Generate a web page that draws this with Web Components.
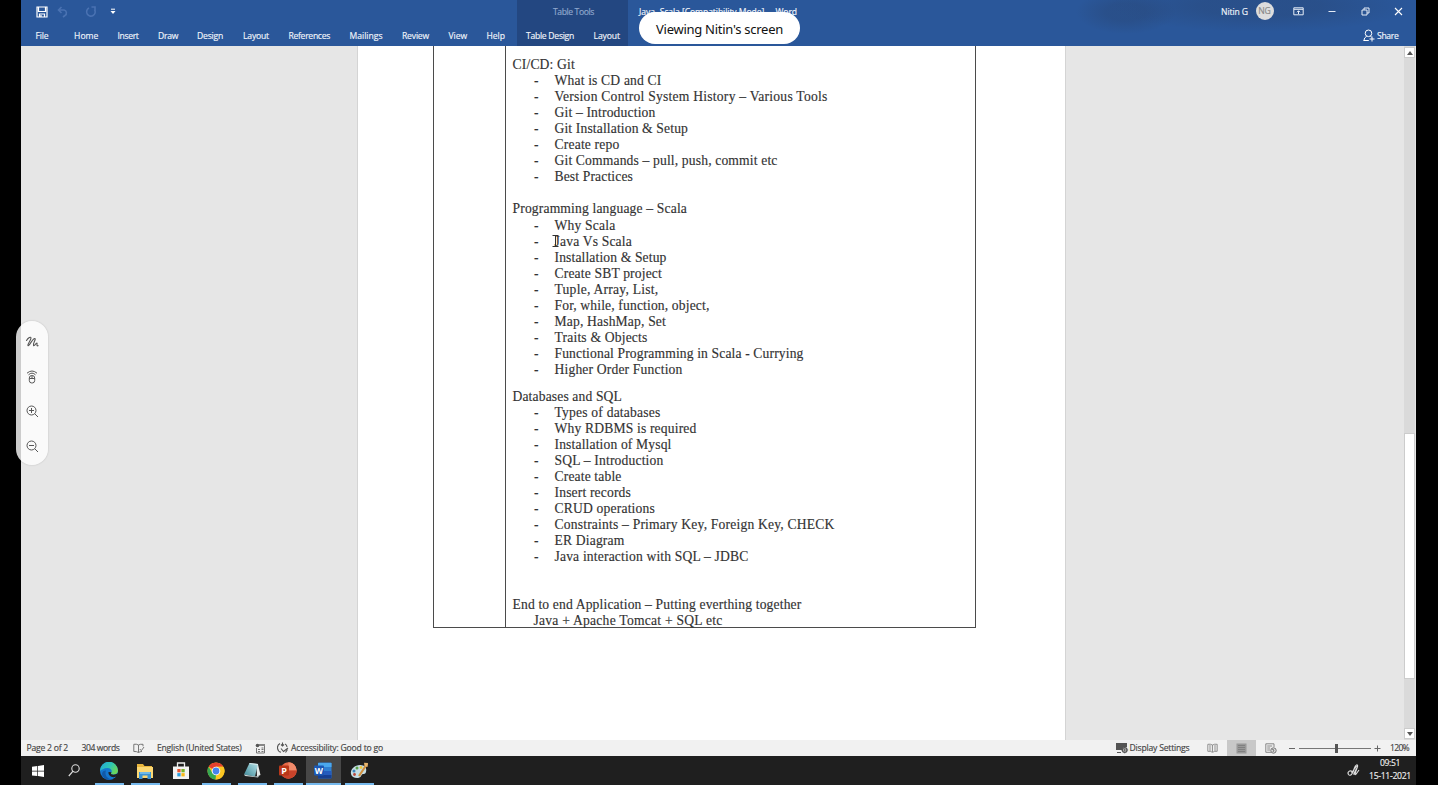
<!DOCTYPE html>
<html lang="en"><head><meta charset="utf-8"><title>Word</title>
<style>body{margin:0;background:#000;overflow:hidden}</style></head><body>
<shared-screen></shared-screen>
<script>
const define=(name,html,after)=>customElements.define(name,class extends HTMLElement{
  connectedCallback(){ if(this.shadowRoot)return; const t=document.createElement('template');t.innerHTML=html;
    this.attachShadow({mode:'open'}).append(t.content.cloneNode(true)); if(after)after.call(this,this.shadowRoot);}
});
// Text run that tracks its letters to occupy the width given in "w".
define('fit-text','<style>:host{display:block;white-space:nowrap;flex:none}span{display:inline-block}</style><span><slot></slot></span>',function(r){
  const w=+this.getAttribute('w');if(!w)return;this.style.width=w+'px';
  const s=r.querySelector('span'),n=this.textContent.length;
  s.style.letterSpacing=((w-s.getBoundingClientRect().width)/n)+'px';
});
// Icon: drawn from the named entry, on a box of w by h.
const ICONS={
save:[12,12,'<path d="M1 1h10v10H1zM2.500 1v4.500h7V1M3.500 11V8h5v3M5 9v2" fill="none" stroke="#fff" stroke-width="1.200"/>'],
undo:[12,12,'<path d="M4.500 1L1.500 4l3 3M2 4h5a3 3 0 0 1 1 5.500L6 11" fill="none" stroke="#4a72b2" stroke-width="1.600"/>'],
redo:[12,12,'<path d="M9.500 3.500A4.300 4.300 0 1 1 4 2M6.500 1H10v4" fill="none" stroke="#4a72b2" stroke-width="1.600"/>'],
more:[6,7,'<path d="M1 1.200h4" stroke="#fff"/><path d="M.5 3h5L3 6z" fill="#fff"/>'],
ribbon:[11,9,'<path d="M.8.8h9.400v7H.8zM1 2.300h9M5.500 7V4M4 5.200l1.500-1.500L7 5.200" fill="none" stroke="#e6edf7"/>'],
min:[8,8,'<path d="M.5 3.500h7" stroke="#e6edf7"/>'],
restore:[9,9,'<path d="M1 3h5v5H1zM3 3V1h5v5H6" fill="none" stroke="#e6edf7"/>'],
close:[9,9,'<path d="M1 1l7 7M8 1L1 8" stroke="#fff" stroke-width="1.100"/>'],
share:[12,13,'<circle cx="5.500" cy="4.300" r="3.300" fill="none" stroke="#fff"/><path d="M.8 12Q1 8.500 3.800 7M.8 11.500h5M7.300 7l1.300 1M9 7.500v5M6.500 10h5" fill="none" stroke="#fff"/>'],
pen:[14,12,'<path d="M1.500 4.500C3 2 6 0 6 2 6 4.500 2 8.500 3 9.500c1.200 1 4.500-7 6.700-7 2 0-2.300 5.500-1.200 7 .9.900 2.300-2.500 3.300-2.500.8 0-.4 2.300.4 2.800.4.200.7 0 .8-.3" fill="none" stroke="#555" stroke-width="1.100" stroke-linecap="round"/>'],
mouse:[12,14,'<path d="M1 3.200Q6-1.200 11 3.200M2.500 4.800Q6 1.500 9.500 4.800" fill="none" stroke="#555"/><rect x="3.300" y="5.500" width="5.400" height="7.500" rx="2.500" fill="none" stroke="#555"/><path d="M3.500 8.500h5M6 5.500v3" stroke="#555"/>'],
zin:[13,13,'<circle cx="5.500" cy="5.500" r="4.500" fill="none" stroke="#555"/><path d="M8.700 8.700L12 12M3 5.500h5M5.500 3v5" stroke="#555"/>'],
zout:[13,13,'<circle cx="5.500" cy="5.500" r="4.500" fill="none" stroke="#555"/><path d="M8.700 8.700L12 12M3 5.500h5" stroke="#555"/>'],
proof:[12,11,'<path d="M5.500 2Q3.500.8.800 1.300v7.200q2.700-.3 4.700 1M5.500 2v7.500M5.500 2Q7 1 10 1.300v2M5.500 9.500Q7 8.500 9 8.500M6.800 6l1.500 1.700L11 4" fill="none" stroke="#777"/>'],
macro:[11,11,'<path d="M4 1h6v2H4z" fill="#888"/><circle cx="2.500" cy="2.500" r="1.800" fill="#555"/><path d="M1.500 5v5h8V3M3 6.500h2M3 8.500h2M6.500 5h2M6.500 6.500h2M6.500 8.500h2" fill="none" stroke="#777"/>'],
access:[12,12,'<path d="M3 1.500A4.700 4.700 0 0 0 4 10.200M5.500.5v3M4 2.500L5.500 4 7 2.500M8 2q2 1 2 3M4 6.500l2.500 3L11 6M8.500 10.500l2-3" fill="none" stroke="#555" stroke-width="1.100"/>'],
display:[13,12,'<path d="M0 1h11v4H8L6 8H0z" fill="#555"/><path d="M1 10.500h4" stroke="#555"/><circle cx="8.700" cy="8" r="2.300" fill="#eee" stroke="#555" stroke-width="1.300"/><circle cx="8.700" cy="8" r=".8" fill="#555"/><path d="M8.700 4.500v7M5.200 8h7" stroke="#555" stroke-width=".6"/>'],
book:[11,10,'<path d="M5.500 2Q3.500.8.800 1.300v7Q3.500 8 5.500 9.300 7.500 8 10.200 8.300v-7Q7.500.8 5.500 2v7M2 3h2.200M2 5h2.200M2 7h2.200M7 3h2.200M7 5h2.200M7 7h2.200" fill="none" stroke="#888" stroke-width=".9"/>'],
print:[11,11,'<path d="M.5.5h10v10H.5z" fill="#999"/><path d="M2 2.500h7M2 4.500h7M2 6.500h7M2 8.500h7" stroke="#808080"/>'],
web:[12,11,'<path d="M9 4V.8H.8v8.500H6M2.200 3h5M2.200 5h3M2.200 7h3" fill="none" stroke="#888"/><circle cx="8.500" cy="7.500" r="2.700" fill="#ddd" stroke="#777"/><path d="M7 6l2 1-1 2" fill="none" stroke="#777"/>'],
win:[12,12,'<path d="M0 1.700L5.300 1v4.700H0zM6 .9L12 0v5.700H6zM0 6.400h5.300v4.700L0 10.400zM6 6.400h6V12l-6-.9z" fill="#fff"/>'],
search:[12,13,'<circle cx="7.500" cy="4.500" r="3.700" fill="none" stroke="#ddd" stroke-width="1.100"/><path d="M5 7.200L.8 12" stroke="#ddd" stroke-width="1.200"/>'],
edge:[18,18,'<defs><linearGradient id="g" x1="0" y1="0" x2="1" y2=".5"><stop stop-color="#22a5df"/><stop offset=".6" stop-color="#2fc8b0"/><stop offset="1" stop-color="#6bd65a"/></linearGradient></defs><circle cx="9" cy="9" r="9" fill="#1577cf"/><path d="M0 9A9 9 0 0 1 18 8.500C18 12 15 13 12 12.300c-1.500-.3-1-1.300-.5-2C12.500 8 10.500 6 7.500 6 4 6 1 8 0 9z" fill="url(#g)"/><path d="M6 8.500C4 13 8 18 13 17 9 19 3 17.500 2 12 2 9.500 4 8.500 6 8.500z" fill="#1259a7"/><path d="M11.500 10.300c-.8 1-.8 2 .8 2.300 2 .3 4-.3 5.700-1.300-.5 1.500-.7 2.200-1.800 3.200C12 16.500 8 13.500 8.500 10z" fill="#202020"/>'],
folder:[18,16,'<path d="M1 1h6l1.500 2H16v12H1z" fill="#e9b63d"/><path d="M1 4h16v11H1z" fill="#fcd873"/><path d="M3 16V9h12v7h-3.500v-3.500h-5V16z" fill="#3b93d4"/><path d="M4 9h10v2H4z" fill="#6fb9e8"/>'],
store:[18,18,'<path d="M5.500 5V1h7v4" fill="none" stroke="#eee" stroke-width="1.300"/><path d="M1 4.500h16V17H1z" fill="#f3f3f3"/><path d="M5.300 7h3.300v3.300H5.300z" fill="#e95430"/><path d="M9.400 7h3.300v3.300H9.400z" fill="#78b428"/><path d="M5.300 11.100h3.300v3.300H5.300z" fill="#2a9fe0"/><path d="M9.400 11.100h3.300v3.300H9.400z" fill="#f9b91a"/>'],
chrome:[18,18,'<circle cx="9" cy="9" r="8.500" fill="#fbc622"/><path d="M9 9L1.600 4.800A8.500 8.500 0 0 1 16.400 4.800H9z" fill="#e4402f"/><path d="M1.600 4.800A8.500 8.500 0 0 0 8.500 17.500L12.500 11 5.500 11z" fill="#35a852"/><path d="M16.400 4.800H9v8.500l-.5 4.200A8.500 8.500 0 0 0 16.400 4.800z" fill="#fbc622"/><circle cx="9" cy="9" r="4.300" fill="#fff"/><circle cx="9" cy="9" r="3.400" fill="#4583ee"/>'],
note:[18,17,'<defs><linearGradient id="n" x1="0" y1="1" x2="1" y2="0"><stop stop-color="#3f8998"/><stop offset="1" stop-color="#b5e2e8"/></linearGradient></defs><path d="M13.500 2.500l1.500 0L17.500 13 14 14.500z" fill="#e3e8e8"/><path d="M6.500 1l8.500 1L12 14.500 1 12.500z" fill="url(#n)"/><path d="M1 12.500l11 2 4-.5-1 1.500-13-1.500z" fill="#c7d3d4"/><path d="M6.500 1.500l8.500 1" stroke="#dcebed"/>'],
ppt:[18,17,'<circle cx="9.500" cy="8.500" r="8.200" fill="#e66a48"/><path d="M9.500.3a8.200 8.200 0 0 1 8.200 8.200H9.500z" fill="#f08a6a"/><path d="M17.700 8.500a8.200 8.200 0 0 1-16 2.500l8-2.500z" fill="#c8432a"/><rect x="0" y="3.500" width="10" height="10" rx="1" fill="#b93719"/><text x="2.300" y="11.700" font-size="9" font-weight="700" font-family="Open Sans" fill="#fff">P</text>'],
word:[18,17,'<rect x="4" y=".5" width="13.500" height="16" rx="1" fill="#2f80d2"/><path d="M4 1h13.500v4H4z" fill="#4aa8ed"/><path d="M4 9h13.500v4H4z" fill="#245bbd"/><path d="M4 13h13.500v3.500H4z" fill="#173f91"/><rect x="0" y="3.500" width="10" height="10" rx="1" fill="#1b58b5"/><text x=".8" y="11.500" font-size="8.500" font-weight="700" font-family="Open Sans" fill="#fff">W</text>'],
paint:[19,17,'<path d="M1 12C0 7 5 3 10 3c5 0 7 3 6 7-1 3-3 1.500-4 2.500S11 16 7 16c-3 0-5.500-1.500-6-4z" fill="#c6dde4"/><circle cx="4" cy="9" r="1.500" fill="#3d86bd"/><circle cx="7" cy="6" r="1.500" fill="#5aa24a"/><circle cx="4.500" cy="12.500" r="1.400" fill="#b9483c"/><circle cx="11" cy="5.500" r="1.400" fill="#eec63d"/><path d="M17 2L9 14" stroke="#d0903f" stroke-width="2.200"/><path d="M14 .8l4 .2-.5 4-3-1z" fill="#e6b36c"/>'],
ink:[13,13,'<path d="M5.500 8C3 5.500 0 8 1.500 10.500 3.500 13 6 9 7.500 4 8.500.5 11 0 10.500 2.500L8 9.500c-.5 1.500.7 1.500 1.500 0L12 6M4.500 9L9.500 2M6.500 10.500l3-6" fill="none" stroke="#ddd" stroke-width="1.200"/>'],
up:[6,4,'<path d="M0 4h6L3 0z" fill="#555"/>'],
down:[6,4,'<path d="M0 0h6L3 4z" fill="#555"/>'],
beam:[7,12,'<path d="M.5.500h6M.5 11.500h6M3.500 1v10" stroke="#333" fill="none"/>']
};
define('ui-icon','<style>:host{display:block;flex:none}svg{display:block}</style><div></div>',function(r){
  const [w,h,b]=ICONS[this.getAttribute('name')];
  r.querySelector('div').innerHTML=`<svg width="${w}" height="${h}" viewBox="0 0 ${w} ${h}">${b}</svg>`;
});
const row=(items)=>items.map(([gap,w,html,extra='',cls=''])=>`<span class="${cls}" style="margin-left:${gap}px;width:${w}px;${extra}">${html}</span>`).join('');
const tx=(w,t)=>`<fit-text w="${w}">${t}</fit-text>`, ic=n=>`<ui-icon name="${n}"></ui-icon>`;
define('word-ribbon',`<style>
:host{display:grid;grid-template-rows:23px 23px;height:46px;color:#f1f5fb;font:8.600px/12px "Open Sans",sans-serif;-webkit-text-stroke:.15px;background:linear-gradient(90deg,#0000 495.500px,#234781 496px 607px,#0000 607.500px),radial-gradient(ellipse 150px 26px at 1240px 6px,#294b8099 40%,#0000),radial-gradient(ellipse 50px 22px at 1105px 12px,#294b8099 40%,#0000),#2a579a}
div{display:flex;align-items:center}.tabs{padding-top:2px;height:21px}span{flex:none;display:block}
.av{display:grid;place-items:center;height:18px;margin-top:-1px;border-radius:9px;background:#ddd;color:#888}
</style><div>${row([[14.500,12,ic('save')],[9.500,12,ic('undo')],[16,12,ic('redo')],[13,6,ic('more')],[437,41,tx(41,'Table Tools'),'color:#90a7cd'],[45,158,tx(158,'Java- Scala [Compatibility Mode]&nbsp; -&nbsp; Word')],[424,27,tx(27,'Nitin G')],[7.500,18,'NG','','av'],[19,11,ic('ribbon')],[24,8,ic('min')],[25,9,ic('restore')],[24,9,ic('close')]])}</div>
<div class="tabs">${row([[14.500,13,tx(13,'File')],[25.500,24.500,tx(24.500,'Home')],[19,21,tx(21,'Insert')],[19.500,20,tx(20,'Draw')],[19,26,tx(26,'Design')],[20,26,tx(26,'Layout')],[19.500,41.500,tx(41.500,'References')],[19.500,33,tx(33,'Mailings')],[19.500,27,tx(27,'Review')],[19.500,18.500,tx(18.500,'View')],[19.500,18.500,tx(18.500,'Help')],[21,48,tx(48,'Table Design')],[19.500,26.500,tx(26.500,'Layout')],[743,12,ic('share')],[2,21.500,tx(21.500,'Share')]])}</div>`);
define('doc-item',`<style>:host{display:grid;grid-template-columns:42px auto;height:16px}i{font-style:normal;padding-left:21.500px}</style><i>-</i><slot></slot>`);
const L=(a)=>a.map(([w,t])=>`<doc-item>${tx(w,t)}</doc-item>`).join('');
define('doc-page',`<style>
:host{display:block;width:709px;background:#fff;border:solid #d4d4d4;border-width:0 1px;box-sizing:border-box;color:#333;font:13.600px/16px "Liberation Serif",serif;-webkit-text-stroke:.15px #333}
.t{display:grid;grid-template-columns:71px 470px;height:581px;margin-left:75px;width:541px;border:solid #4b4b4b;border-width:0 1px 1px;}
.c{border-left:1px solid #4b4b4b;padding:11px 0 0 6.500px;height:570px}
.row{position:relative}ui-icon{position:absolute;left:39px;top:1px}
</style><div class="t"><div></div><div class="c">
${tx(62.500,'CI/CD: Git')}${L([[107,'What is CD and CI'],[273,'Version Control System History – Various Tools'],[101,'Git – Introduction'],[133.500,'Git Installation &amp; Setup'],[65,'Create repo'],[223,'Git Commands – pull, push, commit etc'],[78.500,'Best Practices']])}
<div style="height:16px"></div>${tx(174.500,'Programming language – Scala')}<div style="height:1px"></div>
${L([[61,'Why Scala']])}<div class="row">${L([[77.500,'Java Vs Scala']])}${ic('beam')}</div>${L([[112,'Installation &amp; Setup'],[107.500,'Create SBT project'],[104,'Tuple, Array, List,'],[155,'For, while, function, object,'],[111.500,'Map, HashMap, Set'],[93,'Traits &amp; Objects'],[249,'Functional Programming in Scala - Currying'],[128,'Higher Order Function']])}
<div style="height:11px"></div>${tx(109.500,'Databases and SQL')}
${L([[106,'Types of databases'],[142,'Why RDBMS is required'],[117,'Installation of Mysql'],[109,'SQL – Introduction'],[67,'Create table'],[76.500,'Insert records'],[100.500,'CRUD operations'],[280,'Constraints – Primary Key, Foreign Key, CHECK'],[70,'ER Diagram'],[194,'Java interaction with SQL – JDBC']])}
<div style="height:32px"></div>${tx(289,'End to end Application – Putting everthing together')}<div style="padding-left:21px">${tx(189,'Java + Apache Tomcat + SQL etc')}</div>
</div></div>`);
define('scroll-bar',`<style>:host{display:flex;flex-direction:column;width:11px;margin-right:1px;background:#dadada}
div{box-sizing:border-box;background:#fff;border:1px solid #ccc;height:11px;flex:none;display:grid;place-items:center}</style>
<div style="margin-top:1px">${ic('up')}</div><div style="height:246px;margin-top:375px"></div><div style="margin-top:auto;margin-bottom:1px">${ic('down')}</div>`);
define('status-bar',`<style>:host{display:flex;align-items:center;height:16px;background:#f1f1f1;color:#444;font:8.600px/14px "Open Sans",sans-serif;-webkit-text-stroke:.15px}span{flex:none;display:block}
.s{display:block;width:72px;height:1px;background:#777;margin-left:4px;position:relative}.s:after{content:"";position:absolute;left:36px;top:-4px;width:3px;height:9px;background:#555}</style>
${row([[5.500,41.500,tx(41.500,'Page 2 of 2')],[13.500,38,tx(38,'304 words')],[13.500,12,ic('proof')],[12,84.500,tx(84.500,'English (United States)')],[13,11,ic('macro')],[11.500,12,ic('access')],[2,92,tx(92,'Accessibility: Good to go')],[733,13,ic('display')],[.5,60,tx(60,'Display Settings')],[17,11,ic('book')],[9.500,29,ic('print'),'background:#c8c8c8;height:16px;display:grid;place-items:center'],[8.500,12,ic('web')],[12,6,'','height:1px;background:#666']])}<span class="s"></span>
${row([[3,7,'<svg width="7" height="7" style="display:block"><path d="M.5 3.500h6M3.500.5v6" stroke="#666"/></svg>'],[9.500,19,tx(19,'120%')]])}`);
define('task-button',`<style>:host{display:grid;place-items:center;box-sizing:border-box;width:35.700px;height:29px;position:relative}
:host([on]):after{content:"";position:absolute;bottom:0;left:4px;right:3px;height:2.500px;background:#76b9ed}
:host([active]){background:#474747}:host([active]):after{left:0;right:0}</style><slot></slot>`);
define('task-bar',`<style>:host{display:flex;height:29px;margin-left:-1px;padding-left:0;background:linear-gradient(90deg,#000 1px,#1f1f1f 1px);color:#eee;font:8.600px/13px "Open Sans",sans-serif;-webkit-text-stroke:.15px}
.clock{display:grid;justify-items:end;align-content:start;margin:1px 5px 0 9px}.clock fit-text:first-child{margin-right:11px}</style>
${[['win'],['search'],['edge','on'],['folder','on'],['store'],['chrome','on'],['note','on'],['ppt','on'],['word','on active'],['paint','on']].map(([n,a=''])=>`<task-button ${a}>${ic(n)}</task-button>`).join('')}
<div style="flex:1"></div><div style="align-self:center">${ic('ink')}</div><div class="clock">${tx(20,'09:51')}${tx(42,'15-11-2021')}</div>`);
define('tool-rail',`<style>:host{position:absolute;left:16px;top:321px;width:32px;height:144px;box-sizing:border-box;border-radius:16px;background:linear-gradient(90deg,#ccc 5px,#fafafa 5px);box-shadow:0 0 2px #0003;display:flex;flex-direction:column;align-items:center;justify-content:space-between;padding:15px 0 12px}</style>${ic('pen')}${ic('mouse')}${ic('zin')}${ic('zout')}`);
define('share-pill',`<style>:host{position:absolute;left:639px;top:12px;width:161px;height:32px;box-sizing:border-box;border-radius:16px;background:#fff;color:#111;font:13px/35px "Noto Sans",sans-serif;padding-left:17px}</style>${tx(127,"Viewing Nitin's screen")}`);
define('shared-screen',`<style>:host{display:grid;grid-template-rows:46px 694px 16px 29px;grid-template-columns:1395px;padding-left:21px;height:785px;width:1438px;box-sizing:border-box;position:relative;background:#000}
main{display:flex;background:#e6e6e6;padding-left:336px}scroll-bar{margin-left:auto}</style>
<word-ribbon></word-ribbon><main><doc-page></doc-page><scroll-bar></scroll-bar></main><status-bar></status-bar><task-bar></task-bar><tool-rail></tool-rail><share-pill></share-pill>`);
</script></body></html>
